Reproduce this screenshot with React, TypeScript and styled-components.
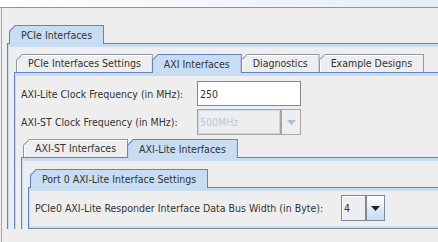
import React from 'react';
import styled, { createGlobalStyle } from 'styled-components';

const Global = createGlobalStyle`
  html, body { margin: 0; padding: 0; background: #eeeeee; overflow: hidden; }
  body {
    font-family: "DejaVu Sans Condensed", "DejaVu Sans", sans-serif;
    font-size: 10.5px;
    color: #333333;
  }
  #root { width: 640px; }
`;

const Header = styled.div`
  height: 7px;
  background: linear-gradient(to right, #ffffff, #d9e5f2);
  border-bottom: 1px solid #8795a4;
`;

const Frame = styled.div`
  margin-left: 1px;
  border-left: 1px solid #a4a4a4;
  padding: 17px 0 0 5px;
  height: 300px;
`;

const Pane = styled.div<{ $mt?: number }>`
  margin-top: ${p => p.$mt ?? 0}px;
`;

const TabRow = styled.div`
  display: flex;
  align-items: flex-start;
  height: 18px;
  padding-left: 2px;
  position: relative;
  z-index: 1;
`;

const TabOuter = styled.div<{ $selected?: boolean }>`
  position: relative;
  z-index: ${p => (p.$selected ? 2 : 1)};
  box-sizing: border-box;
  height: ${p => (p.$selected ? 19 : 18)}px;
  padding: 1px 1px 0 1px;
  background: ${p => (p.$selected ? '#6382bf' : '#8d99a6')};
  clip-path: polygon(0 6px, 6px 0, 100% 0, 100% 100%, 0 100%);
  & + & { margin-left: -1px; }
`;

const TabFace = styled.div<{ $selected?: boolean }>`
  box-sizing: border-box;
  height: 100%;
  display: flex;
  align-items: center;
  padding: 0 11px 1px 11px;
  white-space: nowrap;
  background: ${p => (p.$selected ? '#c8ddf2' : '#eeeeee')};
  box-shadow: ${p => (p.$selected ? 'none' : 'inset 1px 1px 0 #ffffff')};
  clip-path: polygon(0 5.4px, 5.4px 0, 100% 0, 100% 100%, 0 100%);
`;

const Content = styled.div<{ $pt: number; $pb?: number; $closed?: boolean }>`
  border-top: 1px solid #6382bf;
  border-left: 1px solid #6382bf;
  border-bottom: ${p => (p.$closed ? '1px solid #7a8a99' : 'none')};
  box-shadow: inset 0 3px 0 #c8ddf2, inset 1px 0 0 #c8ddf2
    ${p => (p.$closed ? ', inset 0 -2px 0 #c8ddf2' : '')};
  padding: ${p => p.$pt}px 0 ${p => p.$pb ?? 0}px 6px;
`;

const Row = styled.div<{ $mt?: number; $h: number }>`
  display: flex;
  align-items: center;
  height: ${p => p.$h}px;
  margin-top: ${p => p.$mt ?? 0}px;
`;

const Label = styled.div<{ $w: number }>`
  width: ${p => p.$w}px;
  flex: none;
  white-space: nowrap;
`;

const TextField = styled.div`
  box-sizing: border-box;
  width: 104px;
  height: 100%;
  background: #ffffff;
  border: 1px solid #7f8790;
  display: flex;
  align-items: center;
  padding-left: 2px;
`;

const Combo = styled.div`
  display: flex;
  height: 100%;
`;

const ComboField = styled.div<{ $w: number; $disabled?: boolean }>`
  box-sizing: border-box;
  width: ${p => p.$w}px;
  height: 100%;
  display: flex;
  align-items: center;
  padding-left: 2px;
  background: #eeeeee;
  border: 1px solid ${p => (p.$disabled ? '#a6a6a6' : '#7a8a99')};
  box-shadow: ${p =>
    p.$disabled ? 'inset 0 0 0 1px #c5d8ec' : 'inset 1px 1px 0 #ffffff'};
  color: ${p => (p.$disabled ? '#b5cbe3' : '#333333')};
`;

const ComboButton = styled.div<{ $w: number; $disabled?: boolean }>`
  box-sizing: border-box;
  width: ${p => p.$w}px;
  height: 100%;
  display: flex;
  align-items: center;
  justify-content: center;
  border: 1px solid ${p => (p.$disabled ? '#a6a6a6' : '#7a8a99')};
  background: ${p =>
    p.$disabled ? '#eeeeee' : 'linear-gradient(to bottom, #ffffff, #c6daef)'};
`;

const Arrow = ({ color }: { color: string }) => (
  <svg width="9" height="5" viewBox="0 0 9 5">
    <polygon points="0,0 9,0 4.5,5" fill={color} />
  </svg>
);

type TabItem = { label: string; selected?: boolean };

const Tabs = ({ items }: { items: TabItem[] }) => (
  <TabRow>
    {items.map(t => (
      <TabOuter key={t.label} $selected={t.selected}>
        <TabFace $selected={t.selected}>{t.label}</TabFace>
      </TabOuter>
    ))}
  </TabRow>
);

export default function App() {
  return (
    <>
      <Global />
      <Header />
      <Frame>
        <Pane>
          <Tabs items={[{ label: 'PCIe Interfaces', selected: true }]} />
          <Content $pt={10}>
            <Pane>
              <Tabs
                items={[
                  { label: 'PCIe Interfaces Settings' },
                  { label: 'AXI Interfaces', selected: true },
                  { label: 'Diagnostics' },
                  { label: 'Example Designs' },
                ]}
              />
              <Content $pt={8}>
                <Row $h={25}>
                  <Label $w={176}>AXI-Lite Clock Frequency (in MHz):</Label>
                  <TextField>250</TextField>
                </Row>
                <Row $h={26} $mt={3}>
                  <Label $w={176}>AXI-ST Clock Frequency (in MHz):</Label>
                  <Combo>
                    <ComboField $w={84} $disabled>500MHz</ComboField>
                    <ComboButton $w={20} $disabled>
                      <Arrow color="#a4bddb" />
                    </ComboButton>
                  </Combo>
                </Row>
                <Pane $mt={4}>
                  <Tabs
                    items={[
                      { label: 'AXI-ST Interfaces' },
                      { label: 'AXI-Lite Interfaces', selected: true },
                    ]}
                  />
                  <Content $pt={11}>
                    <Pane>
                      <Tabs
                        items={[
                          { label: 'Port 0 AXI-Lite Interface Settings', selected: true },
                        ]}
                      />
                      <Content $pt={7} $pb={7} $closed>
                        <Row $h={26}>
                          <Label $w={306}>
                            PCIe0 AXI-Lite Responder Interface Data Bus Width (in Byte):
                          </Label>
                          <Combo>
                            <ComboField $w={25}>4</ComboField>
                            <ComboButton $w={19}>
                              <Arrow color="#222222" />
                            </ComboButton>
                          </Combo>
                        </Row>
                      </Content>
                    </Pane>
                  </Content>
                </Pane>
              </Content>
            </Pane>
          </Content>
        </Pane>
      </Frame>
    </>
  );
}
